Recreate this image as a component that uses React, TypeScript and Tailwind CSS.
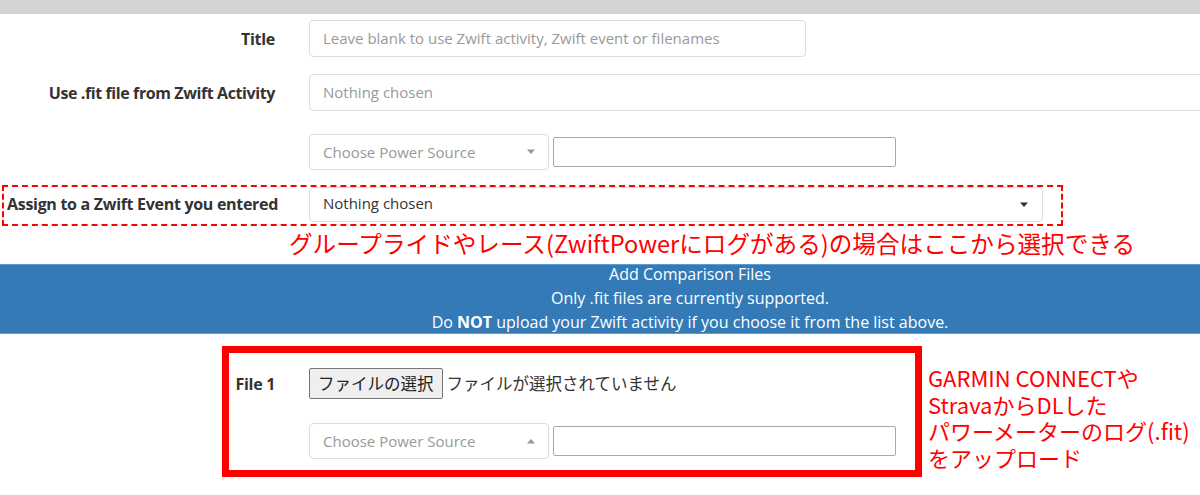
import React from "react";

const latin = { fontFamily: '"Open Sans", "Noto Sans", sans-serif' };
const jp = { fontFamily: '"Noto Sans CJK JP", "Noto Sans", sans-serif' };

function Caret({ up = false, dark = false }: { up?: boolean; dark?: boolean }) {
  return (
    <svg width="10" height="6" viewBox="0 0 10 6" className="shrink-0">
      {up ? (
        <polygon points="1,5.5 9,5.5 5,1" fill={dark ? "#333" : "#999"} />
      ) : (
        <polygon points="1,0.5 9,0.5 5,5" fill={dark ? "#333" : "#999"} />
      )}
    </svg>
  );
}

function PowerRow({ up = false }: { up?: boolean }) {
  return (
    <div className="flex items-center gap-[4px]">
      <div className="flex h-[36px] w-[240px] shrink-0 items-center justify-between rounded-[4px] border border-[#dcdcdc] bg-white pl-[13px] pr-[12px] text-[15px] text-[#999]">
        <span>Choose Power Source</span>
        <Caret up={up} />
      </div>
      <div className="h-[30px] w-[343px] shrink-0 rounded-[2px] border border-[#a9a9a9] bg-white" />
    </div>
  );
}

export default function App() {
  return (
    <div className="relative h-[495px] w-[1200px] overflow-hidden bg-white text-[#333]" style={latin}>
      <div className="h-[14px] bg-[#d3d3d3]" />

      {/* Title */}
      <div className="mt-[6px] flex items-center">
        <div className="w-[276px] shrink-0 whitespace-nowrap pr-[1px] text-right text-[16px] font-bold tracking-[-0.3px]">Title</div>
        <div className="ml-[33px] flex h-[37px] w-[497px] shrink-0 items-center rounded-[4px] border border-[#dcdcdc] px-[13px] text-[15px] text-[#999]">
          Leave blank to use Zwift activity, Zwift event or filenames
        </div>
      </div>

      {/* Use .fit */}
      <div className="mt-[17px] flex items-center">
        <div className="w-[276px] shrink-0 whitespace-nowrap pr-[1px] text-right text-[16px] font-bold tracking-[-0.4px]">Use .fit file from Zwift Activity</div>
        <div className="ml-[33px] flex h-[37px] w-[1000px] shrink-0 items-center rounded-[4px] border border-[#dcdcdc] px-[13px] text-[15px] text-[#999]">
          Nothing chosen
        </div>
      </div>

      {/* Power */}
      <div className="mt-[23px] pl-[309px]">
        <PowerRow />
      </div>

      {/* Assign event - dashed annotation */}
      <div className="ml-[2px] mt-[15px] flex h-[41px] w-[1061px] items-start border-2 border-dashed border-[#ff0000]">
        <div className="flex h-[34px] w-[273px] shrink-0 items-center whitespace-nowrap pl-[3px] text-[16px] font-bold tracking-[-0.3px]">
          Assign to a Zwift Event you entered
        </div>
        <div className="ml-[32px] flex h-[35px] w-[734px] shrink-0 items-center justify-between rounded-[4px] border border-[#dcdcdc] bg-white pl-[13px] pr-[13px] text-[15px] text-[#333]">
          <span className="-mt-[2px]">Nothing chosen</span>
          <Caret dark />
        </div>
      </div>

      <div className="ml-[289px] mt-[1px] h-[37px] whitespace-nowrap text-[23.6px] leading-[32px] text-[#ff0000]" style={jp}>
        グループライドやレース(ZwiftPowerにログがある)の場合はここから選択できる
      </div>

      {/* Blue band */}
      <div className="flex h-[70px] flex-col justify-center border-y border-[#5a9bd8] bg-[#337ab7] pb-[2px] pl-[180px] text-center text-[16px] leading-[24px] text-white">
        <div>Add Comparison Files</div>
        <div>Only .fit files are currently supported.</div>
        <div>
          Do <b>NOT</b> upload your Zwift activity if you choose it from the list above.
        </div>
      </div>

      {/* File 1 box */}
      <div className="ml-[222px] mt-[12px] flex items-start">
        <div className="h-[131px] w-[700px] shrink-0 border-[7px] border-[#ff0000] pt-[15px]">
          <div className="flex items-center">
            <div className="w-[46px] shrink-0 whitespace-nowrap text-right text-[16px] font-bold tracking-[-0.3px]">File 1</div>
            <div className="ml-[34px] flex items-center" style={jp}>
              <div className="flex h-[31px] items-center rounded-[2px] border border-[#767676] bg-[#efefef] px-[8px] text-[16.5px] text-[#222]">
                ファイルの選択
              </div>
              <span className="ml-[4px] whitespace-nowrap text-[16.5px] text-[#333]">ファイルが選択されていません</span>
            </div>
          </div>
          <div className="ml-[80px] mt-[24px]">
            <PowerRow up />
          </div>
        </div>
        <div className="ml-[6px] mt-[18px] whitespace-nowrap text-[22px] leading-[26.5px] text-[#ff0000]" style={jp}>
          <div>GARMIN CONNECTや</div>
          <div>StravaからDLした</div>
          <div>パワーメーターのログ(.fit)</div>
          <div>をアップロード</div>
        </div>
      </div>
    </div>
  );
}
